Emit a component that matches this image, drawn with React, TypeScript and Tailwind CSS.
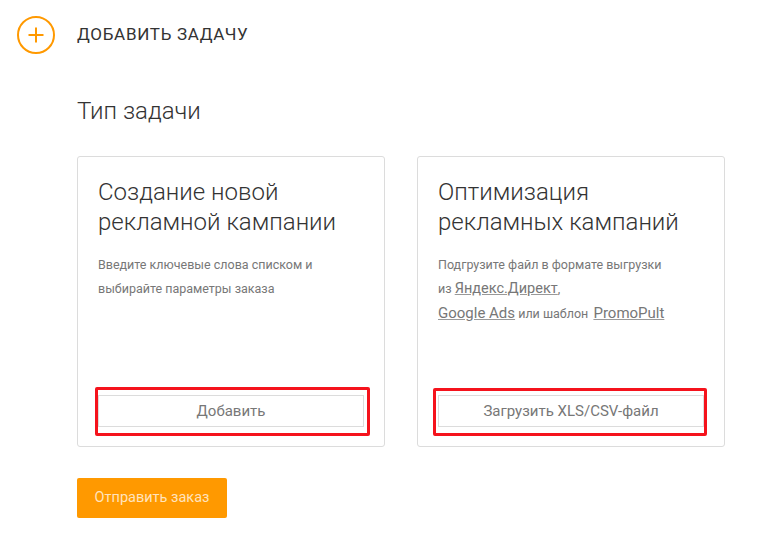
import React from "react";

const roboto = { fontFamily: "Roboto, 'Liberation Sans', Arial, sans-serif" };

function Card({
  title,
  children,
  button,
  redBox,
}: {
  title: React.ReactNode;
  children: React.ReactNode;
  button: string;
  redBox: string;
}) {
  return (
    <div className="flex h-[291px] w-[308px] flex-col rounded-[3px] border border-[#dcdcdc] bg-white px-[20px] pt-[20px] pb-[19px]">
      <div className="text-[24px] font-light leading-[30px] text-[#333]">{title}</div>
      <div className="mt-[16px] text-[12.5px] leading-[24px] text-[#777]">{children}</div>
      <div className="relative mt-auto">
        <button className="h-[32px] w-full border border-[#dcdcdc] bg-white text-[15px] text-[#777]">
          {button}
        </button>
        <div className={"pointer-events-none absolute rounded-[2px] border-[3px] border-[#f5131c] " + redBox} />
      </div>
    </div>
  );
}

export default function App() {
  return (
    <div className="min-h-[541px] w-[765px] bg-white" style={roboto}>
      <div className="flex items-center gap-[22px] pl-[17px] pt-[16px]">
        <svg width="38" height="38" viewBox="0 0 38 38">
          <circle cx="19" cy="19" r="18" fill="none" stroke="#ff9900" strokeWidth="2" />
          <path d="M11.5 19h15M19 11.5v15" stroke="#ff9900" strokeWidth="2" />
        </svg>
        <div className="text-[17px] tracking-[0.7px] text-[#333]">ДОБАВИТЬ ЗАДАЧУ</div>
      </div>
      <div className="pl-[77px]">
        <div className="mt-[42px] text-[24px] font-light leading-[30px] text-[#333]">Тип задачи</div>
        <div className="mt-[30px] flex gap-[32px]">
          <Card
            title={
              <>
                Создание новой
                <br />
                рекламной кампании
              </>
            }
            button="Добавить"
            redBox="left-[-3px] right-[-6px] top-[-8px] bottom-[-9px]"
          >
            Введите ключевые слова списком и
            <br />
            выбирайте параметры заказа
          </Card>
          <Card
            title={
              <>
                Оптимизация
                <br />
                рекламных кампаний
              </>
            }
            button="Загрузить XLS/CSV-файл"
            redBox="left-[-5px] right-[-3px] top-[-7px] bottom-[-9px]"
          >
            Подгрузите файл в формате выгрузки
            <br />
            из <span className="text-[14.5px] text-[#777] underline decoration-[#999]">Яндекс.Директ</span>,
            <br />
            <span className="text-[15px] text-[#777] underline decoration-[#999]">Google Ads</span> или шаблон{" "}
            <span className="ml-[2px] text-[15px] text-[#777] underline decoration-[#999]">PromoPult</span>
          </Card>
        </div>
        <button className="mt-[31px] h-[40px] w-[150px] rounded-[2px] bg-[#ff9900] text-[14.5px] text-[#ffe3bd]">
          Отправить заказ
        </button>
      </div>
    </div>
  );
}
